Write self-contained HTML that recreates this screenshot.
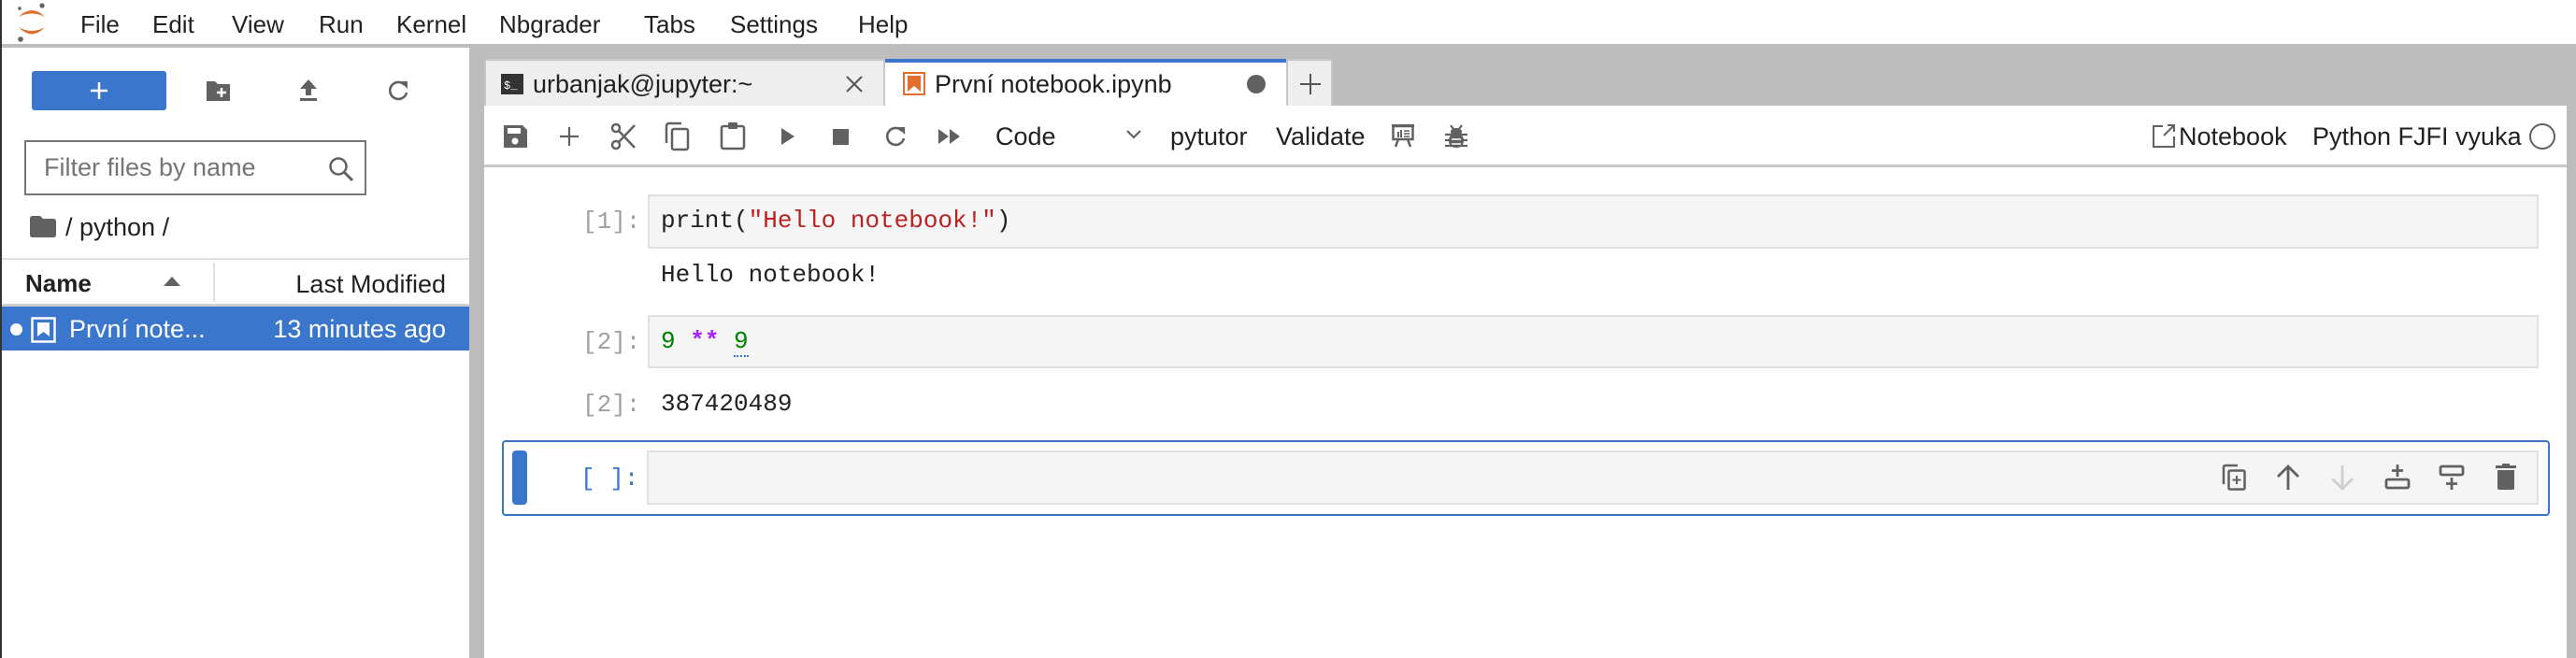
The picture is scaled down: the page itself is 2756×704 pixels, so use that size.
<!DOCTYPE html>
<html><head><meta charset="utf-8"><style>
*{margin:0;padding:0;box-sizing:border-box}
body{width:2756px;height:704px;overflow:hidden;background:#bdbdbd;font-family:"Liberation Sans",sans-serif;color:#212121;position:relative}
.a{position:absolute}
.t{position:absolute;white-space:nowrap;line-height:1}
.mono{font-family:"Liberation Mono","DejaVu Sans Mono",monospace}
</style></head><body>
<!-- menu bar -->
<div class="a" style="left:0;top:0;width:2756px;height:49px;background:#fff;border-bottom:2px solid #bdbdbd"></div>
<div class="a" style="left:0;top:0;width:2px;height:704px;background:#333"></div>
<svg class="a" style="left:14px;top:2px" width="40" height="44" viewBox="0 0 40 44">
<path d="M6 16 Q20 2 34 16 Q20 9 6 16Z" fill="#e46e2e"/>
<path d="M6 27 Q20 42 34 27 Q20 35 6 27Z" fill="#e46e2e"/>
<circle cx="31" cy="4" r="2.6" fill="#616161"/><circle cx="7" cy="7" r="1.8" fill="#616161"/><circle cx="8" cy="40" r="2.8" fill="#616161"/>
</svg>
<div class="t" style="left:86px;top:13px;font-size:26px">File</div>
<div class="t" style="left:163px;top:13px;font-size:26px">Edit</div>
<div class="t" style="left:248px;top:13px;font-size:26px">View</div>
<div class="t" style="left:341px;top:13px;font-size:26px">Run</div>
<div class="t" style="left:424px;top:13px;font-size:26px">Kernel</div>
<div class="t" style="left:534px;top:13px;font-size:26px">Nbgrader</div>
<div class="t" style="left:689px;top:13px;font-size:26px">Tabs</div>
<div class="t" style="left:781px;top:13px;font-size:26px">Settings</div>
<div class="t" style="left:918px;top:13px;font-size:26px">Help</div>

<!-- sidebar -->
<div class="a" style="left:2px;top:51px;width:500px;height:653px;background:#fff"></div>
<div class="a" style="left:34px;top:76px;width:144px;height:42px;background:#3a76cc;border-radius:3px"></div>
<svg class="a" style="left:94px;top:85px" width="24" height="24"><path d="M12 3v18M3 12h18" stroke="#fff" stroke-width="2.5"/></svg>
<svg class="a" style="left:220px;top:84px" width="28" height="26" viewBox="0 0 28 26"><path d="M1 3h9l3 3h13v18H1z" fill="#616161" rx="2"/><path d="M17 10v10M12 15h10" stroke="#fff" stroke-width="2.5"/></svg>
<svg class="a" style="left:318px;top:84px" width="24" height="26"><path d="M12 1 3 11h6v7h6v-7h6z" fill="#616161"/><rect x="3" y="21" width="18" height="3" fill="#616161"/></svg>
<svg class="a" style="left:413px;top:84px" width="26" height="26"><path d="M20 7A9 9 0 1 0 22 15" fill="none" stroke="#616161" stroke-width="2.6"/><path d="M15 3h8v8z" fill="#616161"/></svg>
<div class="a" style="left:26px;top:150px;width:366px;height:59px;border:2px solid #757575"></div>
<div class="t" style="left:47px;top:166px;font-size:27px;color:#757575">Filter files by name</div>
<svg class="a" style="left:350px;top:166px" width="30" height="30"><circle cx="12" cy="12" r="8.5" fill="none" stroke="#616161" stroke-width="2.5"/><path d="M18 18 27 27" stroke="#616161" stroke-width="3"/></svg>
<svg class="a" style="left:32px;top:231px" width="28" height="23"><path d="M0 3Q0 0 3 0h8l3 3h11q3 0 3 3v14q0 3-3 3H3q-3 0-3-3z" fill="#616161"/></svg>
<div class="t" style="left:70px;top:230px;font-size:27px">/ python /</div>
<div class="a" style="left:2px;top:276px;width:500px;height:2px;background:#e0e0e0"></div>
<div class="t" style="left:27px;top:290px;font-size:26px;font-weight:bold">Name</div>
<svg class="a" style="left:174px;top:295px" width="20" height="12"><path d="M10 1 19 11H1z" fill="#616161"/></svg>
<div class="a" style="left:228px;top:281px;width:2px;height:42px;background:#e0e0e0"></div>
<div class="t" style="left:300px;top:291px;width:177px;text-align:right;font-size:27px">Last Modified</div>
<div class="a" style="left:2px;top:325px;width:500px;height:3px;background:#cfcfcf"></div>
<div class="a" style="left:2px;top:328px;width:500px;height:47px;background:#3a76cc"></div>
<div class="a" style="left:11px;top:346px;width:13px;height:13px;border-radius:50%;background:#fff"></div>
<svg class="a" style="left:33px;top:339px" width="27" height="28"><rect x="1.5" y="1.5" width="24" height="25" fill="none" stroke="#fff" stroke-width="2.5"/><path d="M7 6h13v15l-6.5-5-6.5 5z" fill="#fff"/></svg>
<div class="t" style="left:74px;top:339px;font-size:27px;color:#fff">První note...</div>
<div class="t" style="left:270px;top:339px;width:207px;text-align:right;font-size:27px;color:#fff">13 minutes ago</div>

<!-- tab bar -->
<div class="a" style="left:518px;top:63px;width:429px;height:50px;background:#eeeeee;border:2px solid #c8c8c8;border-bottom:none"></div>
<svg class="a" style="left:536px;top:79px" width="24" height="22"><rect width="24" height="22" fill="#333"/><text x="3" y="16" font-size="12" fill="#fff" font-family="Liberation Mono">$_</text></svg>
<div class="t" style="left:570px;top:77px;font-size:27px">urbanjak@jupyter:~</div>
<svg class="a" style="left:904px;top:80px" width="20" height="20"><path d="M2 2 18 18M18 2 2 18" stroke="#555" stroke-width="2"/></svg>
<div class="a" style="left:947px;top:63px;width:429px;height:52px;background:#fff;border-top:4px solid #3a76cc"></div>
<svg class="a" style="left:966px;top:77px" width="24" height="25"><rect x="1" y="1" width="22" height="23" fill="#fff" stroke="#e46e2e" stroke-width="2"/><path d="M5 4h14v17l-7-6-7 6z" fill="#e46e2e"/></svg>
<div class="t" style="left:1000px;top:77px;font-size:27px">První notebook.ipynb</div>
<div class="a" style="left:1334px;top:80px;width:20px;height:20px;border-radius:50%;background:#616161"></div>
<div class="a" style="left:1376px;top:63px;width:50px;height:50px;background:#eeeeee;border:2px solid #c8c8c8;border-bottom:none"></div>
<svg class="a" style="left:1390px;top:78px" width="24" height="24"><path d="M12 1v22M1 12h22" stroke="#555" stroke-width="2"/></svg>

<!-- notebook panel -->
<div class="a" style="left:518px;top:113px;width:2228px;height:591px;background:#fff"></div>
<div class="a" style="left:518px;top:176px;width:2228px;height:3px;background:#c8c8c8"></div>
<svg class="a" style="left:537px;top:132px" width="28" height="28" viewBox="0 0 28 28"><path d="M2 2h20l5 5v19H2z" fill="#616161" /><rect x="6" y="5" width="14" height="6" fill="#fff"/><circle cx="14" cy="19" r="3.5" fill="#fff"/></svg>
<svg class="a" style="left:597px;top:134px" width="24" height="24"><path d="M12 2v20M2 12h20" stroke="#616161" stroke-width="2.2"/></svg>
<svg class="a" style="left:653px;top:131px" width="28" height="30" viewBox="0 0 28 30"><circle cx="6" cy="6" r="4" fill="none" stroke="#616161" stroke-width="2.5"/><circle cx="6" cy="24" r="4" fill="none" stroke="#616161" stroke-width="2.5"/><path d="M9 9 26 27M9 21 26 3" stroke="#616161" stroke-width="2.5"/></svg>
<svg class="a" style="left:711px;top:130px" width="28" height="32"><path d="M18 2H5Q2 2 2 5v18" fill="none" stroke="#616161" stroke-width="2.5"/><rect x="8" y="8" width="17" height="22" rx="2" fill="none" stroke="#616161" stroke-width="2.5"/></svg>
<svg class="a" style="left:770px;top:129px" width="28" height="32"><rect x="2" y="6" width="24" height="24" rx="2" fill="none" stroke="#616161" stroke-width="2.5"/><rect x="9" y="2" width="10" height="7" rx="1" fill="#616161"/></svg>
<svg class="a" style="left:834px;top:136px" width="18" height="20"><path d="M2 1 16 10 2 19z" fill="#616161"/></svg>
<div class="a" style="left:891px;top:138px;width:17px;height:17px;background:#616161"></div>
<svg class="a" style="left:945px;top:133px" width="26" height="26"><path d="M20 7A9 9 0 1 0 22 15" fill="none" stroke="#616161" stroke-width="2.6"/><path d="M15 3h8v8z" fill="#616161"/></svg>
<svg class="a" style="left:1003px;top:137px" width="26" height="18"><path d="M1 1 12 9 1 17zM13 1 24 9 13 17z" fill="#616161"/></svg>
<div class="t" style="left:1065px;top:133px;font-size:27px">Code</div>
<svg class="a" style="left:1204px;top:138px" width="18" height="12"><path d="M2 2 9 9 16 2" fill="none" stroke="#616161" stroke-width="2.2"/></svg>
<div class="t" style="left:1252px;top:133px;font-size:27px">pytutor</div>
<div class="t" style="left:1365px;top:133px;font-size:27px">Validate</div>
<svg class="a" style="left:1487px;top:132px" width="28" height="26" viewBox="0 0 28 26"><rect x="2" y="1" width="24" height="3" fill="#616161"/><rect x="3.5" y="3" width="21" height="14" fill="none" stroke="#616161" stroke-width="2.5"/><rect x="8" y="9" width="2" height="6" fill="#616161"/><rect x="11" y="7" width="2" height="8" fill="#616161"/><path d="M15 8h6M15 11h6M15 14h6" stroke="#616161" stroke-width="1.6"/><path d="M9 17 6 25M19 17 22 25" stroke="#616161" stroke-width="2.5"/></svg>
<svg class="a" style="left:1546px;top:132px" width="24" height="28" viewBox="0 0 24 28"><path d="M6 2l3 4M18 2l-3 4" stroke="#616161" stroke-width="2.2"/><ellipse cx="12" cy="9" rx="6" ry="4" fill="#616161"/><rect x="4" y="11" width="16" height="15" rx="7" fill="#616161"/><path d="M0 12h24M0 18h24M0 24h24" stroke="#616161" stroke-width="2.2"/><path d="M7 17h10M7 22h10" stroke="#fff" stroke-width="1.5"/></svg>
<svg class="a" style="left:2302px;top:132px" width="26" height="26"><path d="M12 3H2v22h22V14" fill="none" stroke="#616161" stroke-width="2"/><path d="M13 13 24 2M17 2h7v7" fill="none" stroke="#616161" stroke-width="2"/></svg>
<div class="t" style="left:2331px;top:133px;font-size:27px">Notebook</div>
<div class="t" style="left:2474px;top:133px;font-size:27px">Python FJFI vyuka</div>
<div class="a" style="left:2706px;top:132px;width:28px;height:28px;border-radius:50%;border:2.5px solid #616161"></div>

<!-- cells -->
<div class="t mono" style="left:623px;top:224px;font-size:26px;color:#a0a0a0">[1]:</div>
<div class="a" style="left:693px;top:208px;width:2023px;height:58px;background:#f5f5f5;border:2px solid #e0e0e0"></div>
<div class="t mono" style="left:707px;top:223px;font-size:26px">print(<span style="color:#ba2121">"Hello notebook!"</span>)</div>
<div class="t mono" style="left:707px;top:281px;font-size:26px">Hello notebook!</div>

<div class="t mono" style="left:623px;top:353px;font-size:26px;color:#a0a0a0">[2]:</div>
<div class="a" style="left:693px;top:337px;width:2023px;height:57px;background:#f5f5f5;border:2px solid #e0e0e0"></div>
<div class="t mono" style="left:707px;top:352px;font-size:26px"><span style="color:#008000">9</span> <span style="color:#aa22ff;font-weight:bold">**</span> <span style="color:#008000;border-bottom:2px dotted #3a76cc">9</span></div>

<div class="t mono" style="left:623px;top:420px;font-size:26px;color:#a0a0a0">[2]:</div>
<div class="t mono" style="left:707px;top:419px;font-size:26px">387420489</div>

<div class="a" style="left:537px;top:471px;width:2191px;height:81px;border:2px solid #3a76cc;border-radius:4px"></div>
<div class="a" style="left:548px;top:482px;width:16px;height:58px;background:#3a76cc;border-radius:4px"></div>
<div class="t mono" style="left:621px;top:499px;font-size:26px;color:#3a76cc">[ ]:</div>
<div class="a" style="left:692px;top:482px;width:2024px;height:58px;background:#f5f5f5;border:2px solid #e0e0e0"></div>
<svg class="a" style="left:2377px;top:496px" width="28" height="30"><path d="M17 2H4Q2 2 2 4v18" fill="none" stroke="#616161" stroke-width="2.5"/><rect x="7.5" y="7.5" width="17" height="20" rx="1.5" fill="none" stroke="#616161" stroke-width="2.5"/><path d="M16 13v9M11.5 17.5h9" stroke="#616161" stroke-width="2"/></svg>
<svg class="a" style="left:2434px;top:496px" width="28" height="30"><path d="M14 28V3M3 14 14 3 25 14" fill="none" stroke="#616161" stroke-width="2.8"/></svg>
<svg class="a" style="left:2492px;top:496px" width="28" height="30"><path d="M14 2v25M3 16l11 11 11-11" fill="none" stroke="#cfcfcf" stroke-width="2.8"/></svg>
<svg class="a" style="left:2551px;top:496px" width="28" height="30"><path d="M14 1v13M8 7.5h12" stroke="#616161" stroke-width="2.8"/><rect x="2" y="17" width="24" height="9" rx="1.5" fill="none" stroke="#616161" stroke-width="2.8"/></svg>
<svg class="a" style="left:2609px;top:496px" width="28" height="30"><rect x="2" y="3" width="24" height="9" rx="1.5" fill="none" stroke="#616161" stroke-width="2.8"/><path d="M14 15v13M8 21.5h12" stroke="#616161" stroke-width="2.8"/></svg>
<svg class="a" style="left:2669px;top:496px" width="24" height="30"><rect x="1" y="2" width="22" height="3" fill="#616161"/><rect x="8" y="0" width="8" height="3" fill="#616161"/><path d="M3 7h18v19q0 2-2 2H5q-2 0-2-2z" fill="#616161"/></svg>
</body></html>
